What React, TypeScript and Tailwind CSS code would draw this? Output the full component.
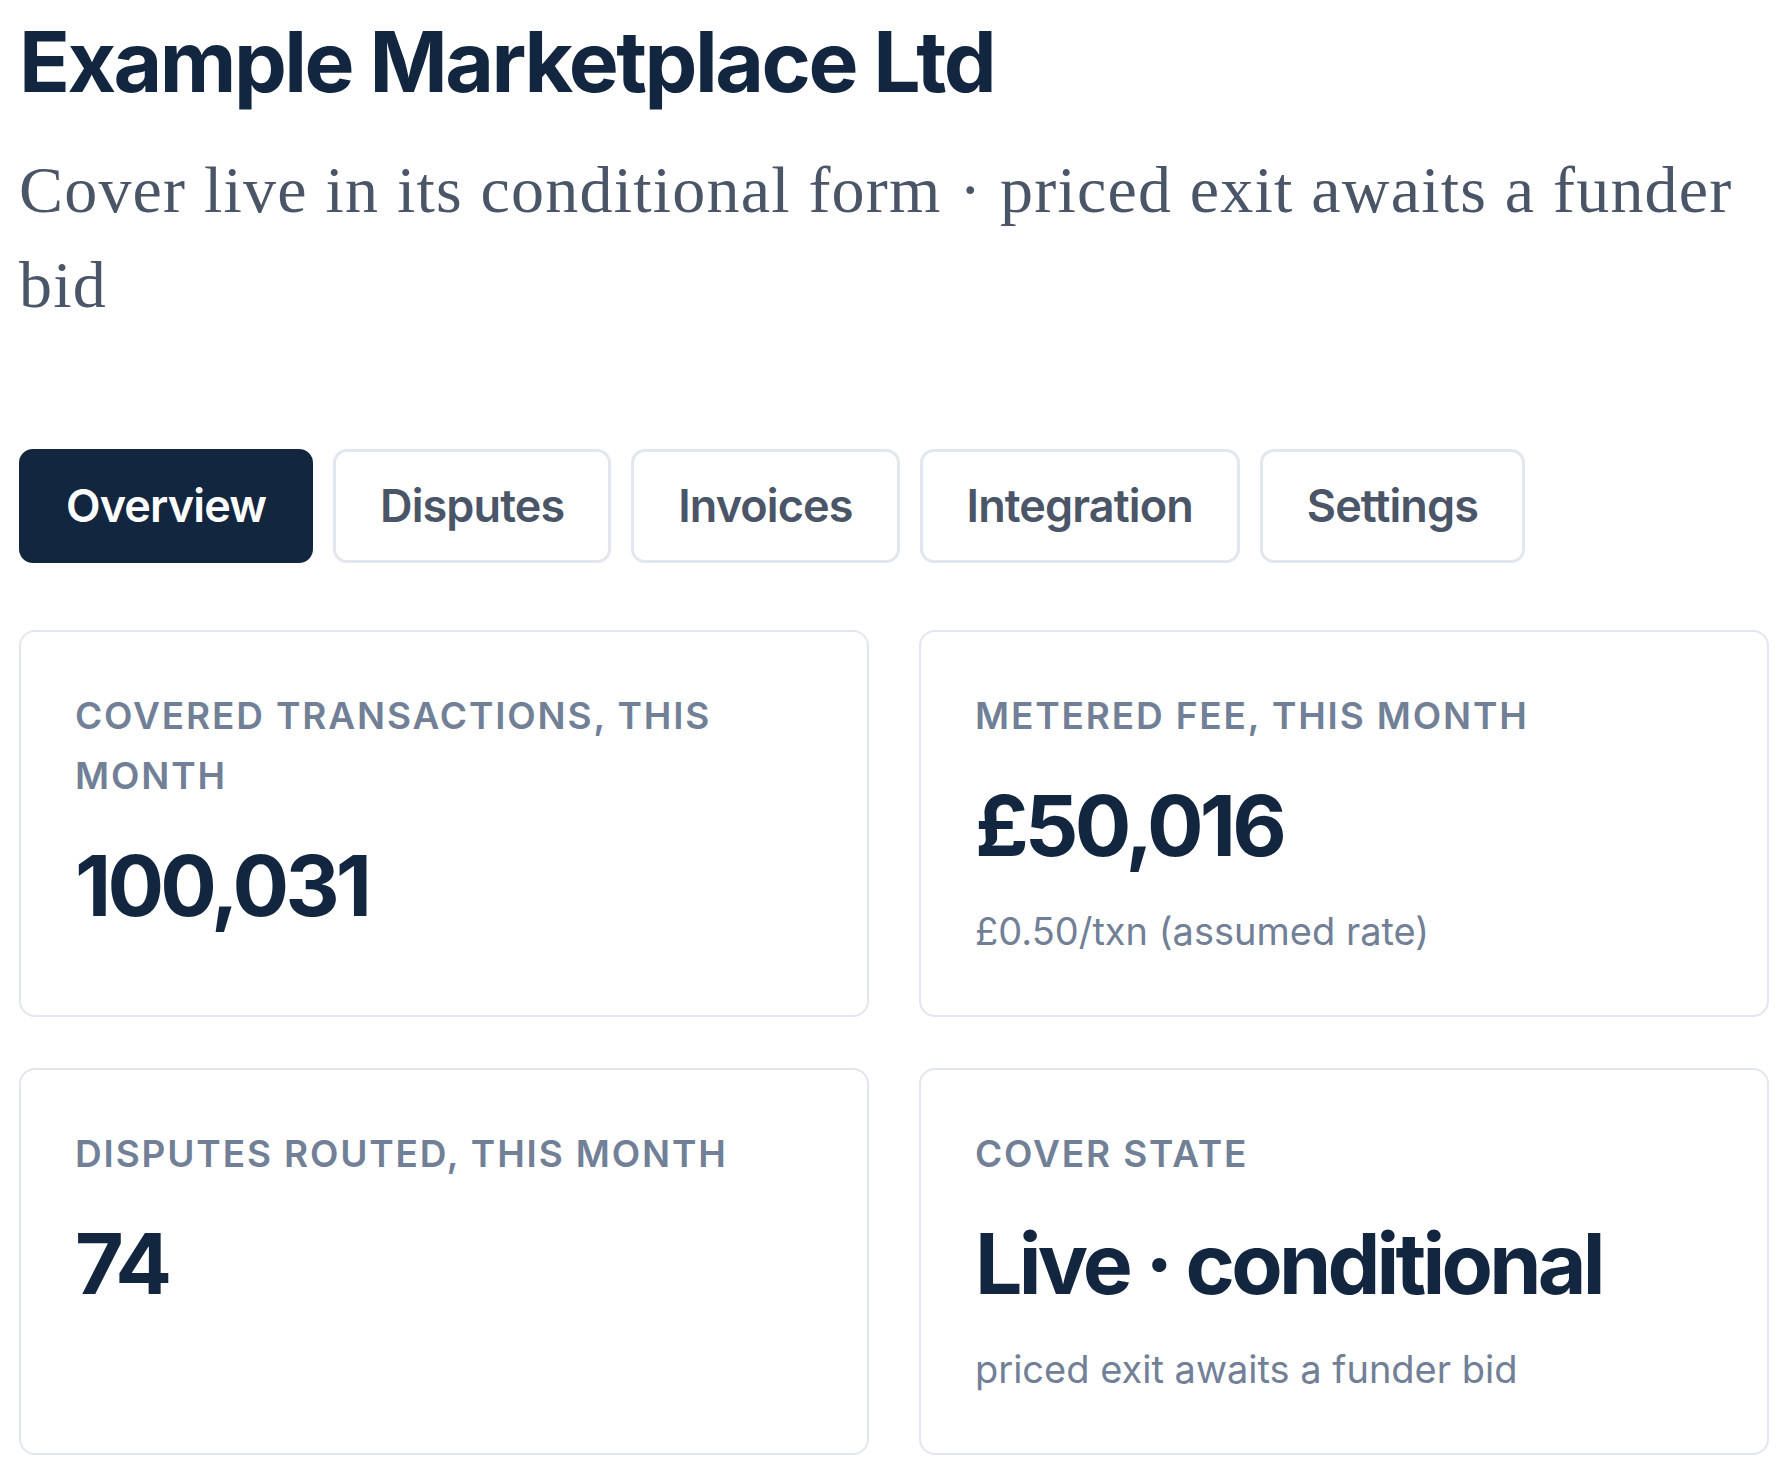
const tabs = ['Overview', 'Disputes', 'Invoices', 'Integration', 'Settings'];

type Stat = {
  label: string;
  value: string;
  note?: string;
};

const stats: Stat[] = [
  { label: 'Covered transactions, this month', value: '100,031' },
  {
    label: 'Metered fee, this month',
    value: '£50,016',
    note: '£0.50/txn (assumed rate)',
  },
  { label: 'Disputes routed, this month', value: '74' },
  {
    label: 'Cover state',
    value: 'Live · conditional',
    note: 'priced exit awaits a funder bid',
  },
];

function StatCard({ stat }: { stat: Stat }) {
  return (
    <div className="rounded-[16px] border-2 border-[#e2e6ee] bg-white px-[54px] pt-[54px] pb-[54px]">
      <p className="text-[37px] leading-[60px] font-semibold tracking-[0.05em] text-[#718096] uppercase">
        {stat.label}
      </p>
      <p className="mt-[32px] text-[84px] leading-[95px] font-bold tracking-[-0.045em] text-[#13263f]">
        {stat.value}
      </p>
      {stat.note && (
        <p className="mt-[28px] text-[38px] leading-[60px] text-[#718096]">
          {stat.note}
        </p>
      )}
    </div>
  );
}

export default function App() {
  return (
    <div className="min-h-screen bg-white px-[19px] pt-[10px] pb-[20px] font-['Inter',sans-serif]">
      <h1 className="text-[84px] leading-[103px] font-bold tracking-[-0.03em] text-[#13263f]">
        Example Marketplace Ltd
      </h1>
      <p className="mt-[29px] font-['Liberation_Serif',serif] text-[66px] leading-[95px] tracking-[1.2px] text-[#4a5568]">
        Cover live in its conditional form · priced exit awaits a funder bid
      </p>

      <div className="mt-[117px] flex gap-[20px]">
        {tabs.map((tab, i) => (
          <button
            key={tab}
            type="button"
            className={
              i === 0
                ? 'flex h-[114px] items-center rounded-[14px] border-[3px] border-[#13263f] bg-[#13263f] px-[44px] text-[45px] font-semibold tracking-[-0.02em] text-white'
                : 'flex h-[114px] items-center rounded-[14px] border-[3px] border-[#e2e6ee] bg-white px-[44px] text-[45px] font-semibold tracking-[-0.02em] text-[#4a5568]'
            }
          >
            {tab}
          </button>
        ))}
      </div>

      <div className="mt-[67px] grid grid-cols-2 gap-x-[50px] gap-y-[51px]">
        {stats.map((stat) => (
          <StatCard key={stat.label} stat={stat} />
        ))}
      </div>
    </div>
  );
}
